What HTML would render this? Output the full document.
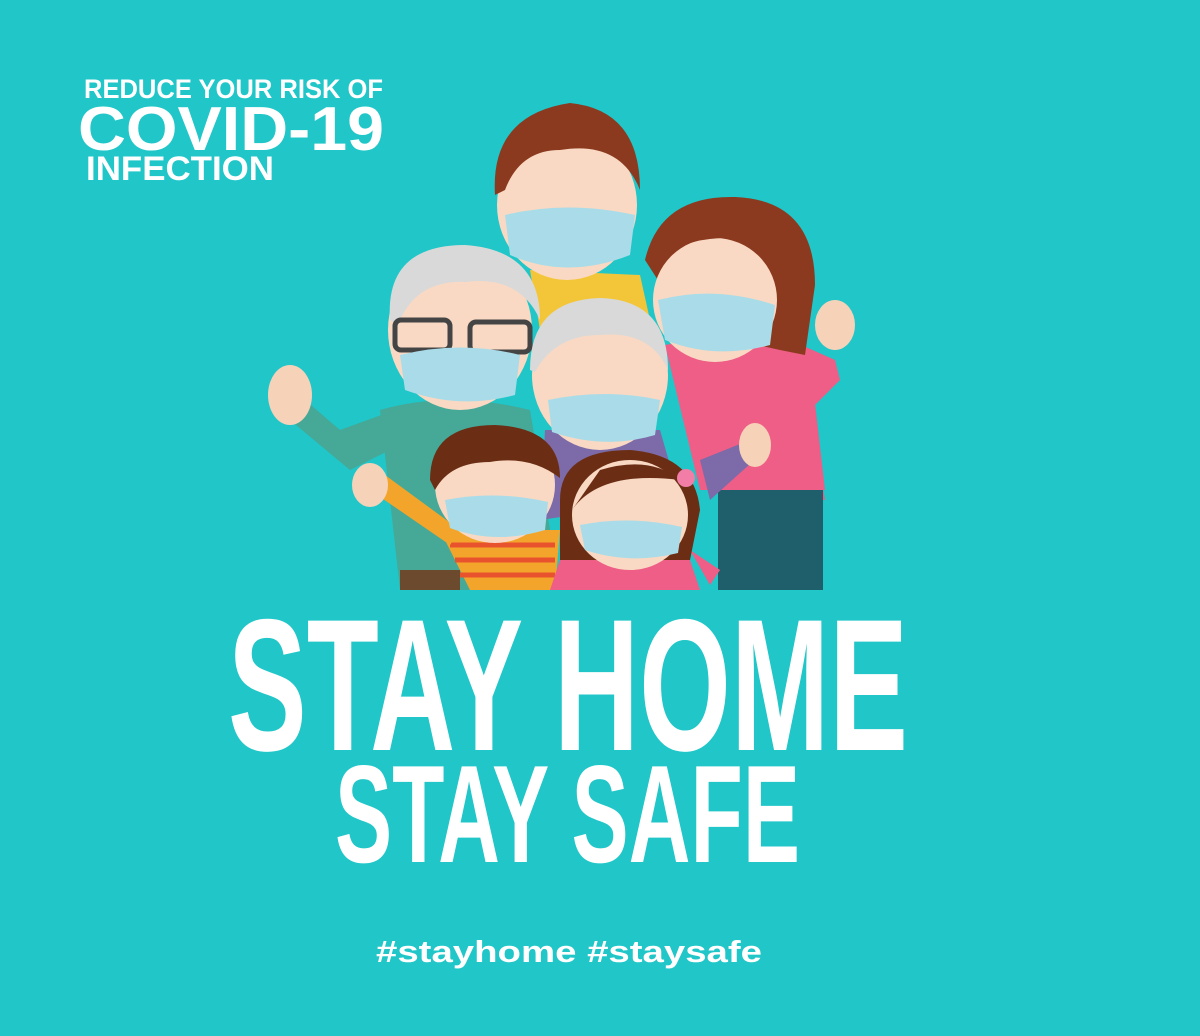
<!DOCTYPE html>
<html><head><meta charset="utf-8"><style>
html,body{margin:0;padding:0;width:1200px;height:1036px;overflow:hidden;background:#20C6C8}
svg{display:block}
</style></head><body>
<svg width="1200" height="1036" viewBox="0 0 1200 1036" xmlns="http://www.w3.org/2000/svg">
<rect width="1200" height="1036" fill="#20C6C8"/>
<g font-family="Liberation Sans, sans-serif" font-weight="bold" fill="#fff">
<text x="84" y="98" font-size="27" textLength="299" lengthAdjust="spacingAndGlyphs">REDUCE YOUR RISK OF</text>
<text x="78" y="150" font-size="62" textLength="306" lengthAdjust="spacingAndGlyphs">COVID-19</text>
<text x="86" y="180" font-size="34" textLength="188" lengthAdjust="spacingAndGlyphs">INFECTION</text>
</g>
<!-- illustration -->
<!-- mom body -->
<path d="M680 360 L800 350 L825 500 L800 500 Z" fill="#EE5E86"/>
<rect x="718" y="480" width="105" height="110" fill="#1E5F6B"/>
<path d="M790 340 L835 360 L840 380 L800 420 Z" fill="#EE5E86"/>
<ellipse cx="835" cy="325" rx="20" ry="25" fill="#F6D2B8"/>
<path d="M665 345 Q740 330 810 360 L825 490 L700 490 Z" fill="#EE5E86"/>
<!-- mom head -->
<path d="M645 260 Q660 195 735 197 Q815 200 815 285 L805 355 L780 350 L690 330 Z" fill="#8B3A1F"/>
<ellipse cx="715" cy="300" rx="62" ry="62" fill="#F9D9C3"/>
<path d="M655 268 Q680 230 760 240 Q730 205 680 220 Z" fill="#8B3A1F"/>
<path d="M658 300 Q715 285 775 305 L770 345 Q715 360 665 340 Z" fill="#A9DCE8"/>
<!-- dad -->
<path d="M530 270 L640 275 L650 320 L540 330 Z" fill="#F3C63A"/>
<ellipse cx="567" cy="205" rx="70" ry="75" fill="#F9D9C3"/>
<path d="M495 195 Q490 115 570 103 Q640 110 640 190 Q620 140 560 150 Q520 150 505 190 Z" fill="#8B3A1F"/>
<path d="M505 215 Q567 200 635 215 L630 255 Q567 280 510 255 Z" fill="#A9DCE8"/>
<!-- grandpa body -->
<path d="M380 410 Q450 390 530 410 L560 590 L400 590 Z" fill="#46A896"/>
<path d="M290 420 L350 470 L410 440 L395 410 L340 430 L305 400 Z" fill="#46A896"/>
<ellipse cx="290" cy="395" rx="22" ry="30" fill="#F6D2B8"/>
<rect x="400" y="570" width="60" height="20" fill="#6B4A2E"/>
<!-- grandpa head -->
<ellipse cx="460" cy="330" rx="72" ry="80" fill="#F9D9C3"/>
<path d="M390 320 Q385 245 465 245 Q540 250 540 320 Q520 275 465 282 Q415 280 398 325 Z" fill="#D9D9D9"/>
<rect x="395" y="320" width="55" height="30" rx="6" fill="none" stroke="#444" stroke-width="5"/>
<rect x="470" y="322" width="60" height="30" rx="6" fill="none" stroke="#444" stroke-width="5"/>
<path d="M400 355 Q460 340 520 355 L515 395 Q460 410 405 390 Z" fill="#A9DCE8"/>
<!-- grandma -->
<path d="M545 430 L660 430 L680 500 L540 520 Z" fill="#7C6BA8"/>
<ellipse cx="600" cy="375" rx="68" ry="75" fill="#F9D9C3"/>
<path d="M530 370 Q530 300 600 298 Q668 300 668 370 Q650 330 600 335 Q555 335 535 372 Z" fill="#D9D9D9"/>
<path d="M548 400 Q605 388 660 400 L655 435 Q605 450 552 432 Z" fill="#A9DCE8"/>
<!-- boy -->
<path d="M440 530 L560 530 L555 590 L470 590 Z" fill="#F3A52B"/>
<g stroke="#E8522C" stroke-width="5"><line x1="450" y1="545" x2="555" y2="545"/><line x1="455" y1="560" x2="555" y2="560"/><line x1="460" y1="575" x2="555" y2="575"/></g>
<path d="M370 490 L450 545 L460 530 L385 475 Z" fill="#F3A52B"/>
<ellipse cx="370" cy="485" rx="18" ry="22" fill="#F6D2B8"/>
<ellipse cx="495" cy="485" rx="60" ry="58" fill="#F9D9C3"/>
<path d="M430 480 Q430 425 495 425 Q560 428 560 478 Q530 455 490 462 Q450 462 435 490 Z" fill="#6B2E14"/>
<path d="M445 500 Q495 490 548 502 L545 530 Q495 545 450 528 Z" fill="#A9DCE8"/>
<!-- girl -->
<path d="M560 560 L690 560 L700 590 L550 590 Z" fill="#EE5E86"/>
<path d="M690 550 L720 570 L710 585 Z" fill="#EE5E86"/>
<path d="M560 500 Q560 450 630 450 Q695 455 700 510 L690 560 L560 560 Z" fill="#6B2E14"/>
<ellipse cx="630" cy="515" rx="58" ry="55" fill="#F9D9C3"/>
<path d="M572 510 Q600 470 680 480 Q650 455 600 470 Z" fill="#6B2E14"/>
<circle cx="686" cy="478" r="9" fill="#F27DA6"/>
<path d="M580 525 Q630 515 682 527 L678 553 Q630 565 585 550 Z" fill="#A9DCE8"/>
<path d="M700 460 L750 440 L760 455 L710 500 Z" fill="#7C6BA8"/>
<ellipse cx="755" cy="445" rx="16" ry="22" fill="#F6D2B8"/>
<!-- big text -->
<g font-family="Liberation Sans, sans-serif" font-weight="bold" fill="#fff">
<text x="228" y="750" font-size="188" textLength="680" lengthAdjust="spacingAndGlyphs">STAY HOME</text>
<text x="335" y="862" font-size="139" textLength="465" lengthAdjust="spacingAndGlyphs">STAY SAFE</text>
<text x="376" y="962" font-size="31" textLength="386" lengthAdjust="spacingAndGlyphs">#stayhome #staysafe</text>
</g>
</svg>
</body></html>
